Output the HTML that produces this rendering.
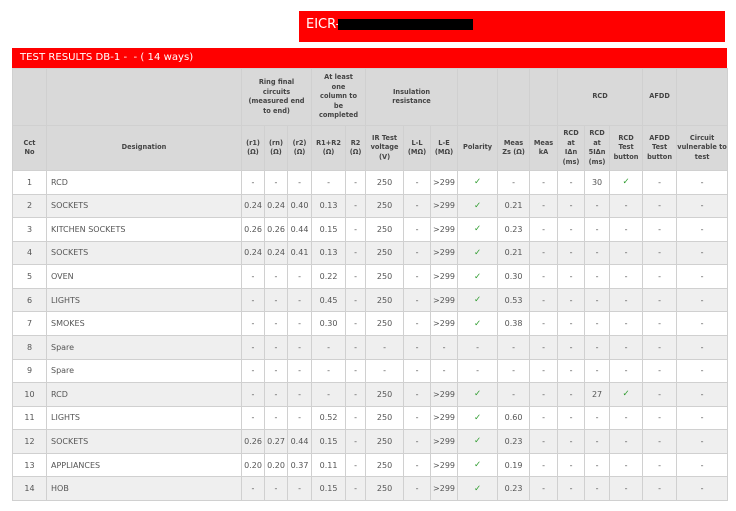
<!DOCTYPE html>
<html><head><meta charset="utf-8"><style>
body{margin:0;width:736px;height:511px;background:#fff;font-family:"DejaVu Sans","Liberation Sans",sans-serif;position:relative;overflow:hidden}
.eicr{position:absolute;left:299px;top:11px;width:426px;height:31px;background:#f00;color:#fff;font-size:13px;line-height:27px;box-sizing:border-box;padding-left:7px}
.eicr span{display:inline-block;background:#000;width:135px;height:11px;vertical-align:middle;margin-left:-2px}
.title{position:absolute;left:12px;top:48px;width:715px;height:20px;background:#f00;color:#fff;font-size:10.1px;line-height:20px;padding-left:8px;box-sizing:border-box}
table{position:absolute;left:12px;top:68px;width:715px;border-collapse:collapse;table-layout:fixed}
td,th{border:1px solid #d0d0d0;padding:0;text-align:center;font-size:8px;color:#555;overflow:hidden}
th{background:#d9d9d9;font-size:6.6px;font-weight:bold;color:#444;line-height:9.5px}
tr.h1 th{padding:0 3px}
tr.h1{height:57px}tr.h2{height:45px}
tbody tr{height:23.57px}
tbody tr:nth-child(even) td{background:#efefef}
td.d{text-align:left;padding-left:4px}
.ck{color:#2a9a2a;font-size:8.5px}
</style></head><body>
<div class="eicr">EICR-<span></span></div>
<div class="title">TEST RESULTS DB-1 -&nbsp; - ( 14 ways)</div>
<table>
<colgroup><col style="width:34px"><col style="width:195px"><col style="width:23px"><col style="width:23px"><col style="width:24px"><col style="width:34px"><col style="width:20px"><col style="width:38px"><col style="width:27px"><col style="width:27px"><col style="width:40px"><col style="width:32px"><col style="width:28px"><col style="width:27px"><col style="width:25px"><col style="width:33px"><col style="width:34px"><col style="width:51px"></colgroup>
<thead>
<tr class="h1"><th></th><th></th><th colspan="3">Ring final<br>circuits<br>(measured end<br>to end)</th><th colspan="2">At least<br>one<br>column to<br>be<br>completed</th><th colspan="3">Insulation<br>resistance</th><th></th><th></th><th></th><th colspan="3">RCD</th><th>AFDD</th><th></th></tr>
<tr class="h2"><th>Cct<br>No</th><th>Designation</th><th>(r1) (Ω)</th><th>(rn) (Ω)</th><th>(r2) (Ω)</th><th>R1+R2 (Ω)</th><th>R2 (Ω)</th><th>IR Test voltage (V)</th><th>L-L (MΩ)</th><th>L-E (MΩ)</th><th>Polarity</th><th>Meas<br>Zs (Ω)</th><th>Meas kA</th><th>RCD<br>at<br>IΔn<br>(ms)</th><th>RCD at 5IΔn (ms)</th><th>RCD Test button</th><th>AFDD Test button</th><th>Circuit vulnerable to test</th></tr>
</thead>
<tbody>
<tr><td>1</td><td class="d">RCD</td><td>-</td><td>-</td><td>-</td><td>-</td><td>-</td><td>250</td><td>-</td><td>&gt;299</td><td class="ck">✓</td><td>-</td><td>-</td><td>-</td><td>30</td><td class="ck">✓</td><td>-</td><td>-</td></tr>
<tr><td>2</td><td class="d">SOCKETS</td><td>0.24</td><td>0.24</td><td>0.40</td><td>0.13</td><td>-</td><td>250</td><td>-</td><td>&gt;299</td><td class="ck">✓</td><td>0.21</td><td>-</td><td>-</td><td>-</td><td>-</td><td>-</td><td>-</td></tr>
<tr><td>3</td><td class="d">KITCHEN SOCKETS</td><td>0.26</td><td>0.26</td><td>0.44</td><td>0.15</td><td>-</td><td>250</td><td>-</td><td>&gt;299</td><td class="ck">✓</td><td>0.23</td><td>-</td><td>-</td><td>-</td><td>-</td><td>-</td><td>-</td></tr>
<tr><td>4</td><td class="d">SOCKETS</td><td>0.24</td><td>0.24</td><td>0.41</td><td>0.13</td><td>-</td><td>250</td><td>-</td><td>&gt;299</td><td class="ck">✓</td><td>0.21</td><td>-</td><td>-</td><td>-</td><td>-</td><td>-</td><td>-</td></tr>
<tr><td>5</td><td class="d">OVEN</td><td>-</td><td>-</td><td>-</td><td>0.22</td><td>-</td><td>250</td><td>-</td><td>&gt;299</td><td class="ck">✓</td><td>0.30</td><td>-</td><td>-</td><td>-</td><td>-</td><td>-</td><td>-</td></tr>
<tr><td>6</td><td class="d">LIGHTS</td><td>-</td><td>-</td><td>-</td><td>0.45</td><td>-</td><td>250</td><td>-</td><td>&gt;299</td><td class="ck">✓</td><td>0.53</td><td>-</td><td>-</td><td>-</td><td>-</td><td>-</td><td>-</td></tr>
<tr><td>7</td><td class="d">SMOKES</td><td>-</td><td>-</td><td>-</td><td>0.30</td><td>-</td><td>250</td><td>-</td><td>&gt;299</td><td class="ck">✓</td><td>0.38</td><td>-</td><td>-</td><td>-</td><td>-</td><td>-</td><td>-</td></tr>
<tr><td>8</td><td class="d">Spare</td><td>-</td><td>-</td><td>-</td><td>-</td><td>-</td><td>-</td><td>-</td><td>-</td><td>-</td><td>-</td><td>-</td><td>-</td><td>-</td><td>-</td><td>-</td><td>-</td></tr>
<tr><td>9</td><td class="d">Spare</td><td>-</td><td>-</td><td>-</td><td>-</td><td>-</td><td>-</td><td>-</td><td>-</td><td>-</td><td>-</td><td>-</td><td>-</td><td>-</td><td>-</td><td>-</td><td>-</td></tr>
<tr><td>10</td><td class="d">RCD</td><td>-</td><td>-</td><td>-</td><td>-</td><td>-</td><td>250</td><td>-</td><td>&gt;299</td><td class="ck">✓</td><td>-</td><td>-</td><td>-</td><td>27</td><td class="ck">✓</td><td>-</td><td>-</td></tr>
<tr><td>11</td><td class="d">LIGHTS</td><td>-</td><td>-</td><td>-</td><td>0.52</td><td>-</td><td>250</td><td>-</td><td>&gt;299</td><td class="ck">✓</td><td>0.60</td><td>-</td><td>-</td><td>-</td><td>-</td><td>-</td><td>-</td></tr>
<tr><td>12</td><td class="d">SOCKETS</td><td>0.26</td><td>0.27</td><td>0.44</td><td>0.15</td><td>-</td><td>250</td><td>-</td><td>&gt;299</td><td class="ck">✓</td><td>0.23</td><td>-</td><td>-</td><td>-</td><td>-</td><td>-</td><td>-</td></tr>
<tr><td>13</td><td class="d">APPLIANCES</td><td>0.20</td><td>0.20</td><td>0.37</td><td>0.11</td><td>-</td><td>250</td><td>-</td><td>&gt;299</td><td class="ck">✓</td><td>0.19</td><td>-</td><td>-</td><td>-</td><td>-</td><td>-</td><td>-</td></tr>
<tr><td>14</td><td class="d">HOB</td><td>-</td><td>-</td><td>-</td><td>0.15</td><td>-</td><td>250</td><td>-</td><td>&gt;299</td><td class="ck">✓</td><td>0.23</td><td>-</td><td>-</td><td>-</td><td>-</td><td>-</td><td>-</td></tr>
</tbody>
</table>
</body></html>
